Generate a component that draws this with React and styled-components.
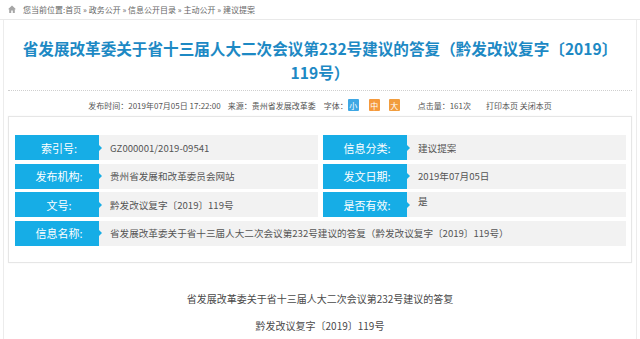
import React from "react";
import styled, { createGlobalStyle } from "styled-components";

const GlobalStyle = createGlobalStyle`
  html, body {
    margin: 0;
    padding: 0;
    background: #fff;
    overflow: hidden;
  }
  body {
    font-family: "Noto Sans CJK SC", "Noto Sans", sans-serif;
    color: #555;
  }
`;

function App() {
  const info = [
    { label: "索引号:", value: "GZ000001/2019-09541" },
    { label: "信息分类:", value: "建议提案" },
    { label: "发布机构:", value: "贵州省发展和改革委员会网站" },
    { label: "发文日期:", value: "2019年07月05日" },
    { label: "文号:", value: "黔发改议复字〔2019〕119号" },
    { label: "是否有效:", value: "是", raised: true },
    {
      label: "信息名称:",
      value: "省发展改革委关于省十三届人大二次会议第232号建议的答复（黔发改议复字〔2019〕119号）",
      wide: true
    }
  ];

  return (
    <>
      <GlobalStyle />
      <Crumbs>
        <svg width="8" height="8" viewBox="0 0 8 8">
          <path d="M4 0.5 L0 4.2 H1.2 V8 H3.2 V5.5 H4.8 V8 H6.8 V4.2 H8 Z" fill="#a6a6a6" />
        </svg>
        <span>您当前位置:首页 » 政务公开 » 信息公开目录 » 主动公开 » 建议提案</span>
      </Crumbs>
      <Main>
        <Title>省发展改革委关于省十三届人大二次会议第232号建议的答复（黔发改议复字〔2019〕119号）</Title>
        <Divider />
        <Meta>
          <MetaItem>发布时间：2019年07月05日 17:22:00</MetaItem>
          <MetaItem space={7}>来源：贵州省发展改革委</MetaItem>
          <MetaItem space={8}>字体：</MetaItem>
          <SizeButton color="#3ea7e4">小</SizeButton>
          <SizeButton color="#f5993c" space={10}>中</SizeButton>
          <SizeButton color="#f19d3e" space={9}>大</SizeButton>
          <MetaItem space={18}>点击量：161次</MetaItem>
          <MetaItem space={15}>打印本页 关闭本页</MetaItem>
        </Meta>
        <InfoBox>
          {info.map(({ label, value, wide, raised }) => (
            <InfoRow key={label} wide={wide}>
              <Label>{label}</Label>
              <Value raised={raised}>{value}</Value>
            </InfoRow>
          ))}
        </InfoBox>
        <Body>
          <p>省发展改革委关于省十三届人大二次会议第232号建议的答复</p>
          <p>黔发改议复字〔2019〕119号</p>
        </Body>
      </Main>
    </>
  );
}

const Crumbs = styled.div`
  height: 20px;
  box-sizing: border-box;
  display: flex;
  align-items: center;
  gap: 7px;
  padding-left: 8px;
  border-bottom: 1px solid #e9e9e9;
  font-size: 8px;
  color: #666;

  svg {
    margin-top: -1px;
  }
`;

const Main = styled.div`
  margin: 0 3px;
  padding: 0 4px;
  border: 1px solid #ececec;
  border-top: none;
`;

const Title = styled.h1`
  margin: 0;
  padding: 16px 14px 6px;
  font-size: 15.6px;
  line-height: 24px;
  font-weight: bold;
  text-align: center;
  color: #1d89c4;
`;

const Divider = styled.div`
  border-top: 1px dotted #cfcfcf;
`;

const Meta = styled.div`
  display: flex;
  justify-content: center;
  align-items: center;
  height: 16px;
  padding: 6px 0 0 0;
  font-size: 8px;
  color: #555;
`;

const MetaItem = styled.span`
  margin-left: ${(p) => p.space || 0}px;
  white-space: nowrap;
`;

const SizeButton = styled.span`
  display: inline-flex;
  align-items: center;
  justify-content: center;
  width: 11px;
  height: 12px;
  margin-left: ${(p) => p.space || 0}px;
  border-radius: 1px;
  background: ${(p) => p.color};
  color: #fff;
  font-size: 8px;
`;

const InfoBox = styled.div`
  margin-top: 3px;
  padding: 18px 5px 16px 6px;
  border: 1px solid #e6e6e6;
  box-shadow: 0 0 2px rgba(0, 0, 0, 0.04);
  display: grid;
  grid-template-columns: 1fr 1fr;
  column-gap: 5px;
  row-gap: 3.5px;
`;

const InfoRow = styled.div`
  display: flex;
  height: 25px;
  background: #f2f2f2;
  grid-column: ${(p) => (p.wide ? "1 / -1" : "auto")};
`;

const Label = styled.div`
  position: relative;
  flex: 0 0 84px;
  display: flex;
  align-items: center;
  justify-content: center;
  padding-left: 4px;
  box-sizing: border-box;
  background: #16ade6;
  color: #fff;
  font-size: 11px;

  &::after {
    content: "";
    position: absolute;
    right: -3px;
    top: 50%;
    margin-top: -3px;
    border-style: solid;
    border-width: 3px 0 3px 3px;
    border-color: transparent transparent transparent #16ade6;
  }
`;

const Value = styled.div`
  display: flex;
  align-items: center;
  padding: 0 0 ${(p) => (p.raised ? "8px" : "0")} 11px;
  font-size: 9.6px;
  color: #555;
  white-space: nowrap;
  overflow: hidden;
`;

const Body = styled.div`
  padding-top: 26px;
  text-align: center;
  font-size: 10px;
  color: #4a4a4a;

  p {
    margin: 0 0 7px;
    line-height: 20px;
  }
`;

export default App;
